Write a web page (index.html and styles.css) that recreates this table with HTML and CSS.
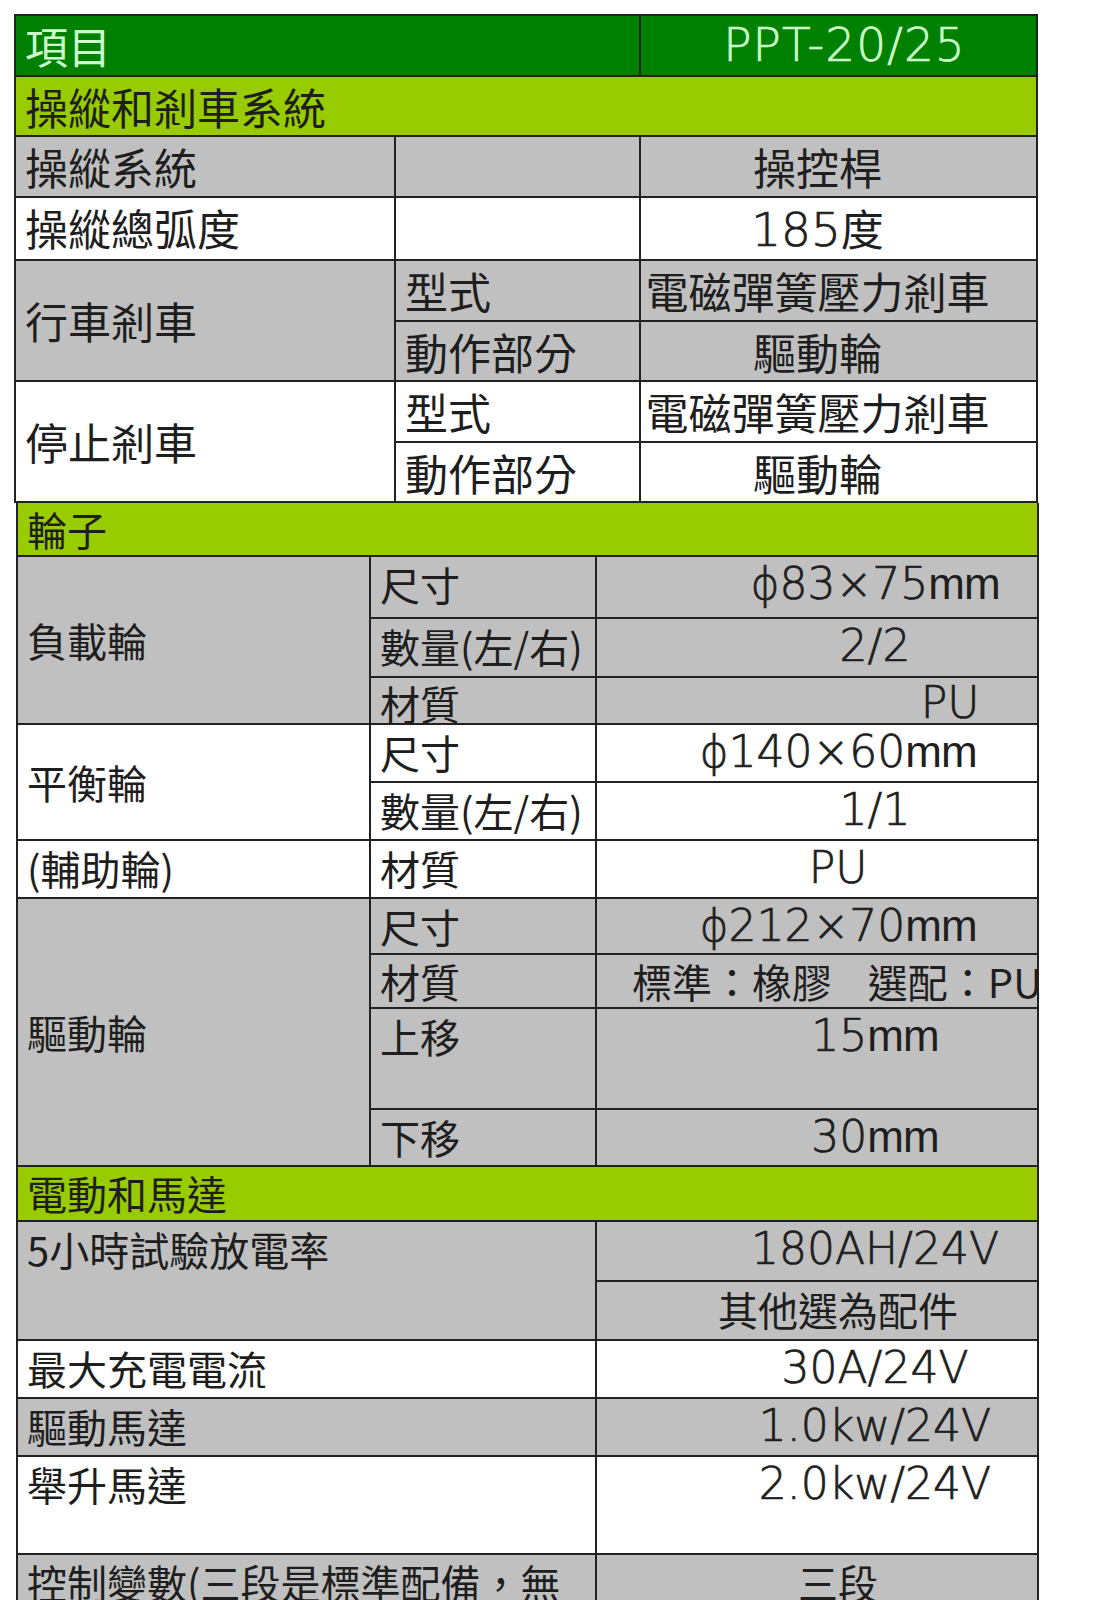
FILE: index.html
```html
<!DOCTYPE html>
<html lang="zh-Hant">
<head>
<meta charset="utf-8">
<title>PPT-20/25 規格</title>
<link rel="stylesheet" href="styles.css">
</head>
<body>
<div class="sheet">
<table class="spec top">
  <colgroup><col class="t1"><col class="t2"><col class="t3"></colgroup>
  <tr class="hdr"><td colspan="2">項目</td><td class="model">PPT-20/25</td></tr>
  <tr class="sec"><td colspan="3">操縱和剎車系統</td></tr>
  <tr class="gray"><td>操縱系統</td><td></td><td class="val">操控桿</td></tr>
  <tr class="white"><td>操縱總弧度</td><td></td><td class="val"><span class="num">185</span>度</td></tr>
  <tr class="gray"><td rowspan="2" class="mid">行車剎車</td><td>型式</td><td class="val">電磁彈簧壓力剎車</td></tr>
  <tr class="gray"><td>動作部分</td><td class="val">驅動輪</td></tr>
  <tr class="white"><td rowspan="2" class="mid">停止剎車</td><td>型式</td><td class="val">電磁彈簧壓力剎車</td></tr>
  <tr class="white"><td>動作部分</td><td class="val">驅動輪</td></tr>
</table>
<table class="spec bottom">
  <colgroup><col class="b1"><col class="b2"><col class="b3"></colgroup>
  <tr class="sec h54 first"><td colspan="3">輪子</td></tr>
  <tr class="gray h62"><td rowspan="3" class="mid">負載輪</td><td>尺寸</td><td class="v cb">ϕ83×75<span class="mm">mm</span></td></tr>
  <tr class="gray h59"><td>數量(左/右)</td><td class="v cb">2/2</td></tr>
  <tr class="gray h47"><td>材質</td><td class="v cc">PU</td></tr>
  <tr class="white h58"><td rowspan="2" class="mid">平衡輪</td><td>尺寸</td><td class="v ca">ϕ140×60<span class="mm">mm</span></td></tr>
  <tr class="white h58"><td>數量(左/右)</td><td class="v cb">1/1</td></tr>
  <tr class="white h58"><td>(輔助輪)</td><td>材質</td><td class="v ca">PU</td></tr>
  <tr class="gray h56"><td rowspan="4" class="mid">驅動輪</td><td>尺寸</td><td class="v ca">ϕ212×70<span class="mm">mm</span></td></tr>
  <tr class="gray h54"><td>材質</td><td class="vc cl">標準：橡膠&nbsp;&nbsp;&nbsp; 選配：PU</td></tr>
  <tr class="gray h101"><td>上移</td><td class="v cb">15<span class="mm">mm</span></td></tr>
  <tr class="gray h57"><td>下移</td><td class="v cb">30<span class="mm">mm</span></td></tr>
  <tr class="sec h55"><td colspan="3">電動和馬達</td></tr>
  <tr class="gray h60"><td colspan="2" rowspan="2">5小時試驗放電率</td><td class="v cb">180AH/24V</td></tr>
  <tr class="gray h59"><td class="vc ca">其他選為配件</td></tr>
  <tr class="white h58"><td colspan="2">最大充電電流</td><td class="v cb">30A/24V</td></tr>
  <tr class="gray h58"><td colspan="2">驅動馬達</td><td class="v cb">1.0kw/24V</td></tr>
  <tr class="white h98"><td colspan="2">舉升馬達</td><td class="v cb">2.0kw/24V</td></tr>
  <tr class="gray h60"><td colspan="2">控制變數(三段是標準配備，無</td><td class="vc ca">三段</td></tr>
</table>
</div>
</body>
</html>
```

FILE: styles.css
```css
* { box-sizing: border-box; }

html, body {
  margin: 0;
  padding: 0;
  background: #ffffff;
}

.sheet {
  padding: 14px 0 0 14px;
}

.spec {
  border-collapse: collapse;
  table-layout: fixed;
  color: #1e1e1e;
  font-family: "Noto Sans CJK TC", "Noto Sans CJK SC", sans-serif;
  font-weight: 400;
}

.spec td {
  border: 2px solid #222222;
  padding: 0 0 0 9px;
  white-space: nowrap;
  vertical-align: top;
}

.spec .mid { vertical-align: middle; }

/* upper block */
.top {
  width: 1022px;
  font-size: 43px;
}
.top td { line-height: 58.5px; }
.t1 { width: 380px; }
.t2 { width: 245px; }
.t3 { width: 397px; }

/* lower block */
.bottom {
  width: 1021px;
  margin-left: 2px;
  font-size: 40px;
}
.bottom td { line-height: 54px; }
.b1 { width: 353px; }
.b2 { width: 226px; }
.b3 { width: 442px; }
.bottom .first > td { border-top: 0; }

/* row fills */
.hdr > td {
  background: #008000;
  color: #ccffcc;
}
.sec > td { background: #99cc00; }
.gray > td { background: #c0c0c0; }
.white > td { background: #ffffff; }

/* header model */
.model {
  font-family: "DejaVu Sans", "Noto Sans CJK TC", sans-serif;
  font-size: 47px;
  font-weight: 200;
  letter-spacing: 1px;
  text-align: center;
  -webkit-text-stroke: 0.6px currentColor;
}
.spec .model { padding-left: 12px; }

/* upper values */
.spec .val {
  text-align: center;
  padding: 0 42px 0 0;
}
.num {
  font-family: "DejaVu Sans", sans-serif;
  font-size: 47px;
  font-weight: 200;
  -webkit-text-stroke: 0.7px currentColor;
}

/* lower values */
.v {
  font-family: "DejaVu Sans", "Noto Sans CJK TC", sans-serif;
  font-size: 44px;
  font-weight: 200;
  -webkit-text-stroke: 0.7px currentColor;
}
.vc { font-size: 40px; }
.mm {
  font-family: "Liberation Sans Narrow", "Liberation Sans", sans-serif;
  font-weight: 400;
  letter-spacing: -1px;
  -webkit-text-stroke: 0;
}
.spec .ca { text-align: center; padding-left: 42px; }
.spec .cb { text-align: center; padding-left: 116px; }
.spec .cc { text-align: center; padding-left: 266px; }
.spec .cl { text-align: left; padding-left: 35px; overflow: hidden; }

/* row heights */
.bottom .h54 > td { line-height: 52px; }
.bottom .h55 > td { line-height: 53px; }
.bottom .h47 > td { line-height: 40px; padding-top: 5px; }
.h56 > td { height: 56px; }
.h57 > td { height: 57px; }
.h58 > td { height: 58px; }
.h59 > td { height: 59px; }
.h60 > td { height: 60px; }
.h62 > td { height: 62px; }
.h98 > td { height: 98px; }
.h101 > td { height: 101px; }
```
